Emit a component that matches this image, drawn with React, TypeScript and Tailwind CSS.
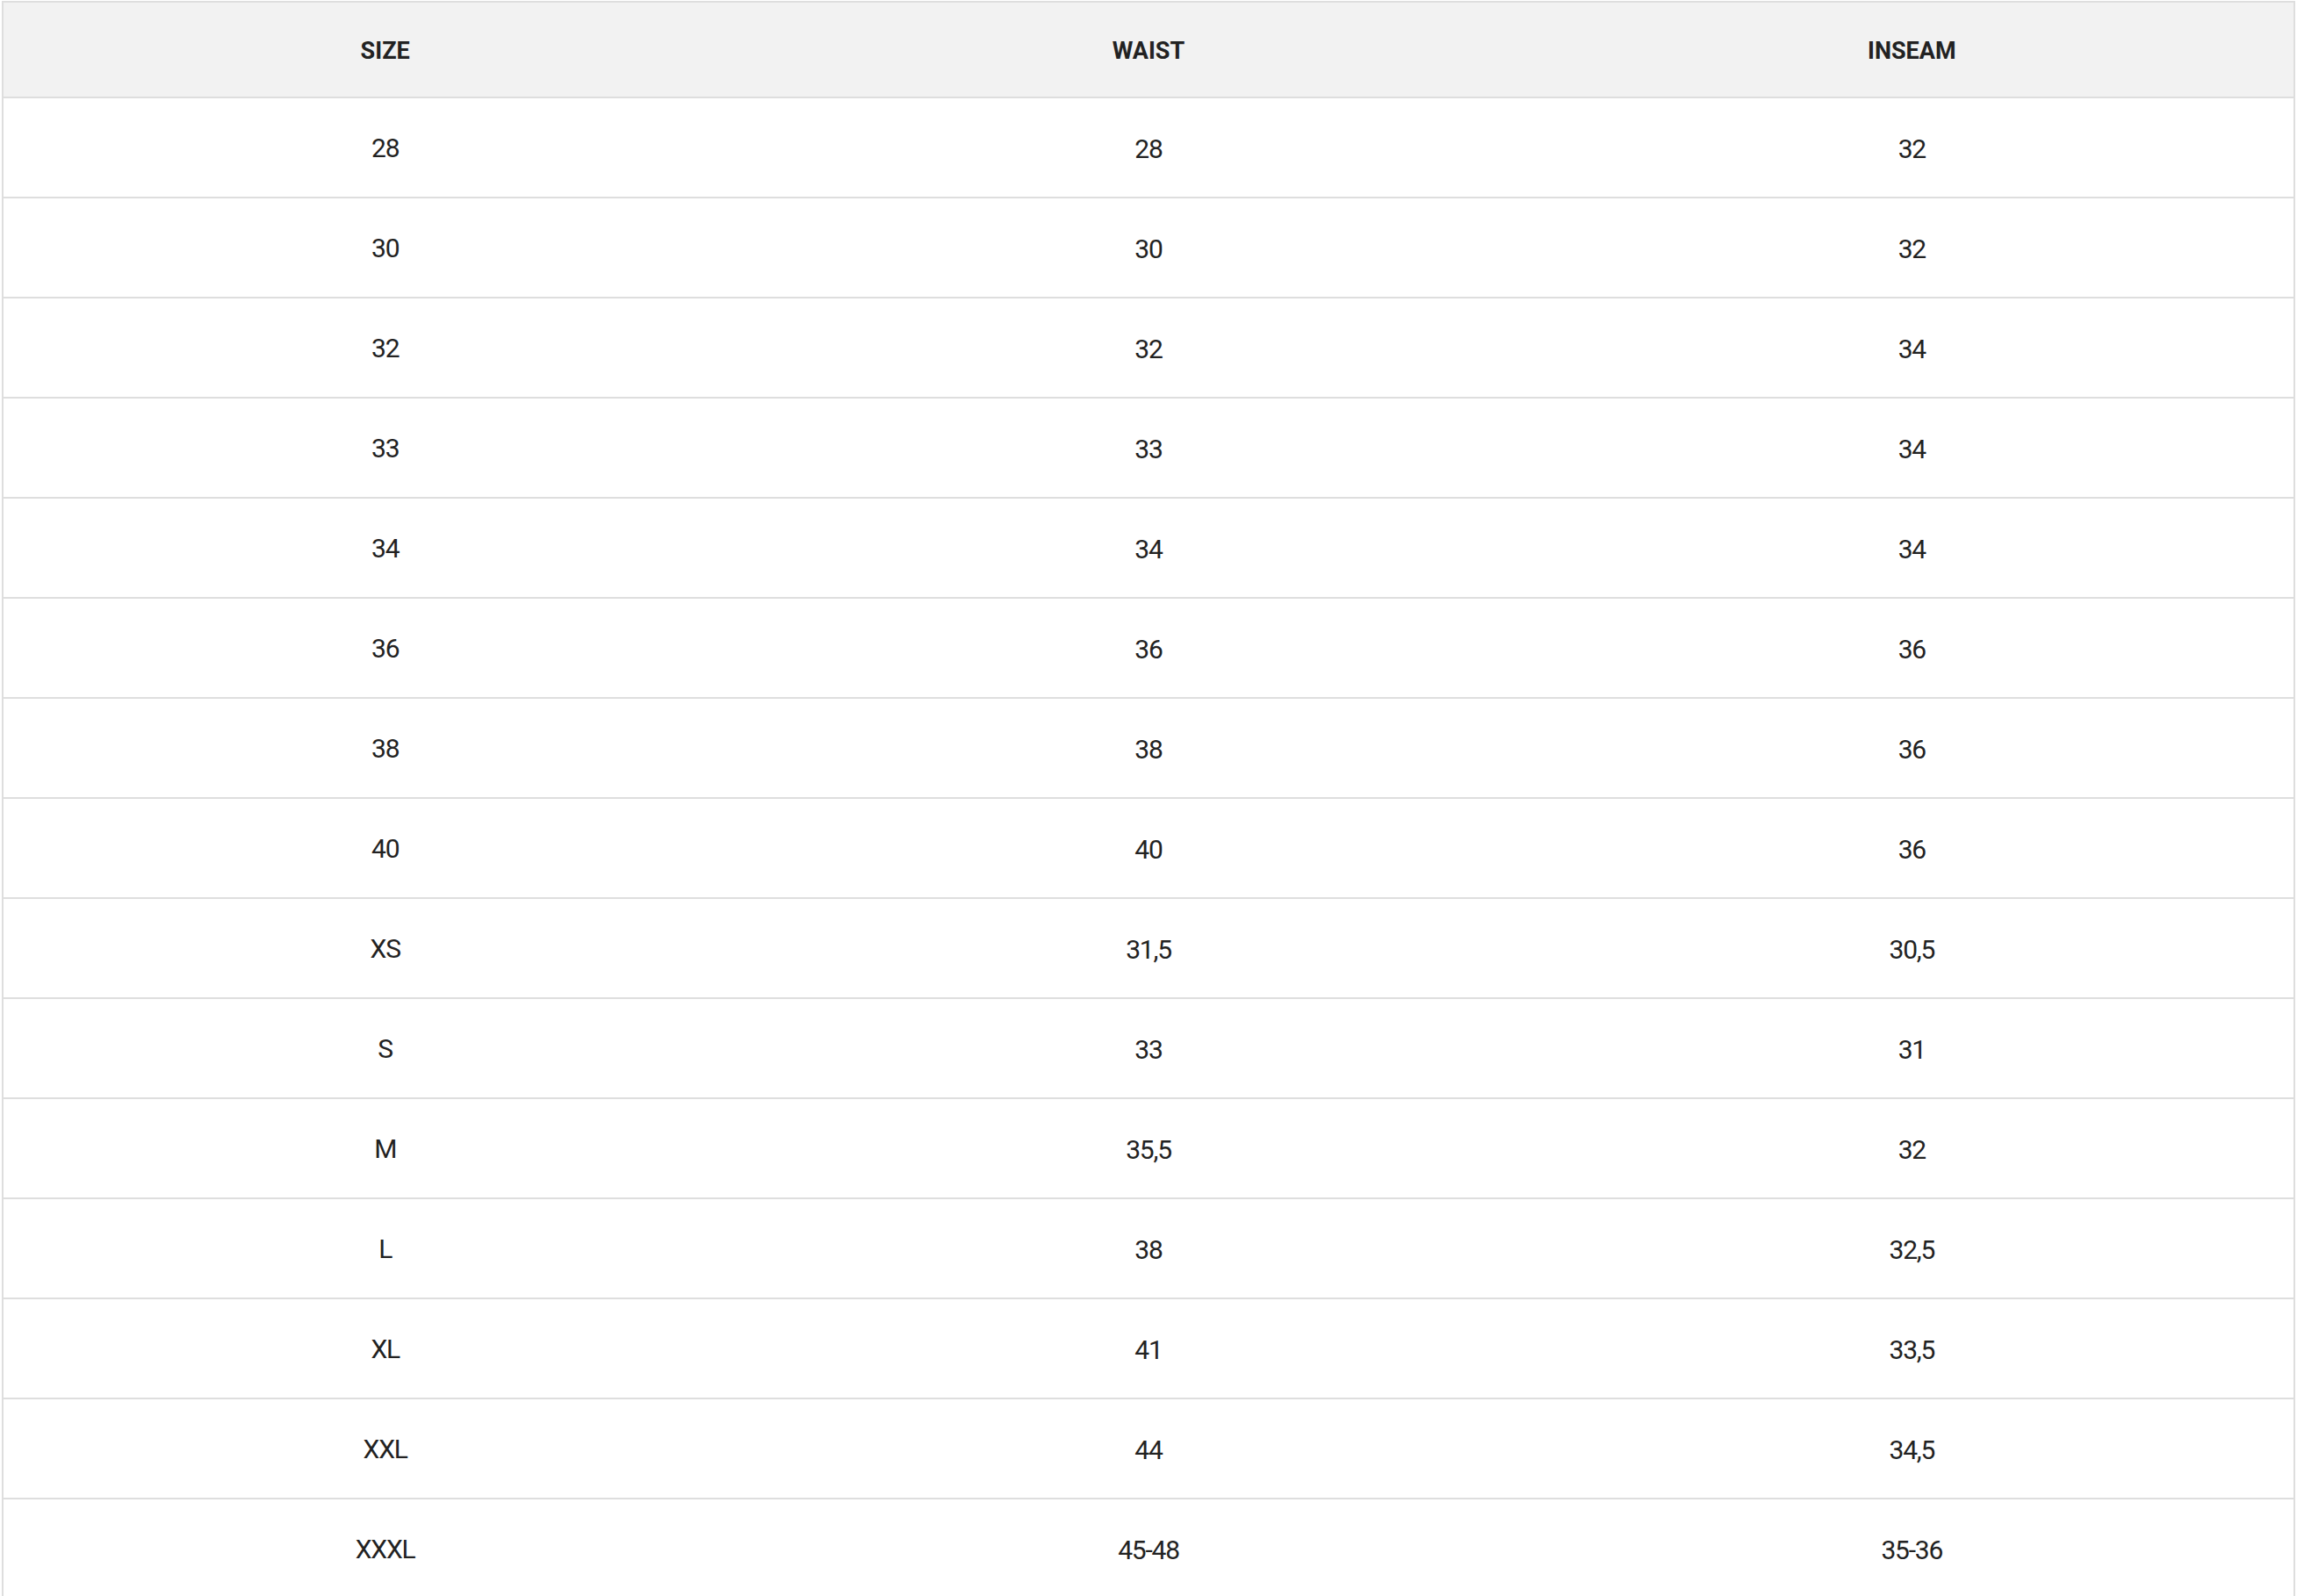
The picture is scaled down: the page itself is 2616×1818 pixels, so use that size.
import React from "react";

const rows: [string, string, string][] = [
  ["28", "28", "32"],
  ["30", "30", "32"],
  ["32", "32", "34"],
  ["33", "33", "34"],
  ["34", "34", "34"],
  ["36", "36", "36"],
  ["38", "38", "36"],
  ["40", "40", "36"],
  ["XS", "31,5", "30,5"],
  ["S", "33", "31"],
  ["M", "35,5", "32"],
  ["L", "38", "32,5"],
  ["XL", "41", "33,5"],
  ["XXL", "44", "34,5"],
  ["XXXL", "45-48", "35-36"],
];

export default function App() {
  return (
    <div className="h-[1818px] overflow-hidden bg-white pl-[2px] pr-[2px] pt-[1px] font-['Roboto','Liberation_Sans',sans-serif] text-[#222222]">
      <div className="border-2 border-[#dedede]">
        <div className="grid h-[109px] grid-cols-3 items-center border-b-2 border-[#dedede] bg-[#f2f2f2] pt-[4px] text-center text-[27px] font-bold">
          <div>SIZE</div>
          <div>WAIST</div>
          <div>INSEAM</div>
        </div>
        {rows.map((r, i) => (
          <div
            key={i}
            className="grid h-[114px] grid-cols-3 items-center border-b-2 border-[#dedede] pt-[3px] text-center text-[30px] tracking-[-1.2px]"
          >
            <div className="pb-[3px]">{r[0]}</div>
            <div>{r[1]}</div>
            <div>{r[2]}</div>
          </div>
        ))}
      </div>
    </div>
  );
}
